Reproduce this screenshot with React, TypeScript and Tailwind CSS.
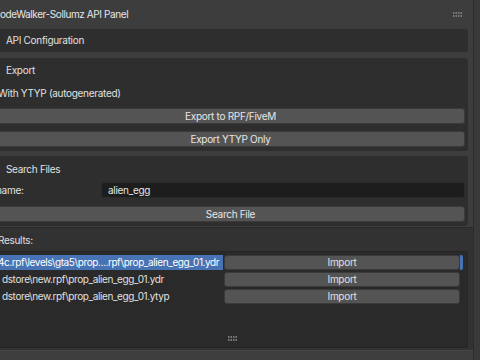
import React from "react";

function Grip() {
  return (
    <svg width="10" height="6" viewBox="0 0 10 6">
      {[0, 1].map((r) =>
        [0, 1, 2, 3].map((c) => (
          <rect key={`${r}-${c}`} x={c * 2.5} y={r * 3} width="1.5" height="2" fill="#7a7a7a" />
        ))
      )}
    </svg>
  );
}

function Btn({ children, className = "" }: { children: React.ReactNode; className?: string }) {
  return (
    <div
      className={`h-[16px] rounded-[3px] bg-[#545454] border border-[#3a3a3a] flex items-center justify-center text-[#e6e6e6] ${className}`}
    >
      {children}
    </div>
  );
}

export default function App() {
  const rows = [
    { text: "4c.rpf\\levels\\gta5\\prop....rpf\\prop_alien_egg_01.ydr", sel: true },
    { text: "dstore\\new.rpf\\prop_alien_egg_01.ydr", sel: false },
    { text: "dstore\\new.rpf\\prop_alien_egg_01.ytyp", sel: false },
  ];
  return (
    <div
      className="w-[480px] h-[360px] overflow-hidden bg-[#3d3d3d] flex text-[10px] tracking-[-0.3px] text-[#e0e0e0]"
      style={{ fontFamily: "Inter, 'DejaVu Sans', sans-serif" }}
    >
      <div className="w-[473px] h-full flex flex-col">
        {/* title */}
        <div className="h-[29px] flex items-center justify-between pr-[10px] shrink-0">
          <span className="ml-[-7px] tracking-[-0.4px] text-[#e6e6e6]">CodeWalker-Sollumz API Panel</span>
          <Grip />
        </div>
        <div className="pr-[5px] flex flex-col">
          {/* API Configuration */}
          <div className="h-[23px] rounded-[3px] bg-[#2e2e2e] flex items-center pl-[10px] ml-[-4px]">
            API Configuration
          </div>
          {/* Export */}
          <div className="mt-[6px] h-[93px] rounded-[3px] bg-[#2e2e2e] ml-[-4px] pr-[3px] flex flex-col">
            <div className="h-[25px] flex items-center pl-[10px]">Export</div>
            <div className="h-[20px] flex items-center pl-[2px]">With YTYP (autogenerated)</div>
            <div className="mt-[5px] flex flex-col gap-[7px]">
              <Btn>Export to RPF/FiveM</Btn>
              <Btn>Export YTYP Only</Btn>
            </div>
          </div>
          {/* Search */}
          <div className="mt-[5px] h-[70px] rounded-[3px] bg-[#2e2e2e] ml-[-4px] pr-[3px] flex flex-col">
            <div className="h-[26px] flex items-center pl-[10px]">Search Files</div>
            <div className="h-[16px] flex items-center">
              <span className="w-[106px] ml-[-1px] pl-[1px]">name:</span>
              <div className="flex-1 h-[16px] rounded-[3px] bg-[#1d1d1d] border border-[#2a2a2a] flex items-center pl-[6px] text-[#e6e6e6]">
                alien_egg
              </div>
            </div>
            <div className="mt-[8px]">
              <Btn>Search File</Btn>
            </div>
          </div>
        </div>
        {/* Results */}
        <div className="mt-[1px] flex-1 bg-[#323232] flex flex-col pr-[5px] border-t border-[#2a2a2a]">
          <div className="h-[22px] flex items-center ml-[-2px] mt-[1px]">Results:</div>
          <div className="h-[97px] bg-[#2a2a2a] rounded-[3px] border border-[#262626] pt-[3px] pr-[4px] ml-[-4px] flex flex-col gap-[2px] relative">
            {rows.map((r, i) => (
              <div key={i} className="h-[15px] flex items-center">
                <div
                  className={`w-[226px] h-[15px] flex items-center overflow-hidden whitespace-nowrap tracking-[-0.4px] ${
                    r.sel ? "bg-[#4772b3] text-white" : ""
                  }`}
                >
                  <span className={r.sel ? "ml-[1px]" : "ml-[5px]"}>{r.text}</span>
                </div>
                <div className="flex-1 ml-[1px] h-[15px] rounded-[3px] bg-[#545454] border border-[#3a3a3a] flex items-center justify-center">
                  Import
                </div>
                <div className={`w-[3px] h-[15px] rounded-r-[2px] ${r.sel ? "bg-[#4772b3]" : ""}`} />
              </div>
            ))}
            <div className="absolute bottom-[5px] left-[231px]">
              <Grip />
            </div>
          </div>
          <div className="flex-1" />
        </div>
        <div className="h-[10px] bg-[#3e3e3e] border-t border-[#454545] shrink-0" />
      </div>
      <div className="flex-1 h-full bg-[#393939] border-l border-[#2c2c2c]" />
    </div>
  );
}
